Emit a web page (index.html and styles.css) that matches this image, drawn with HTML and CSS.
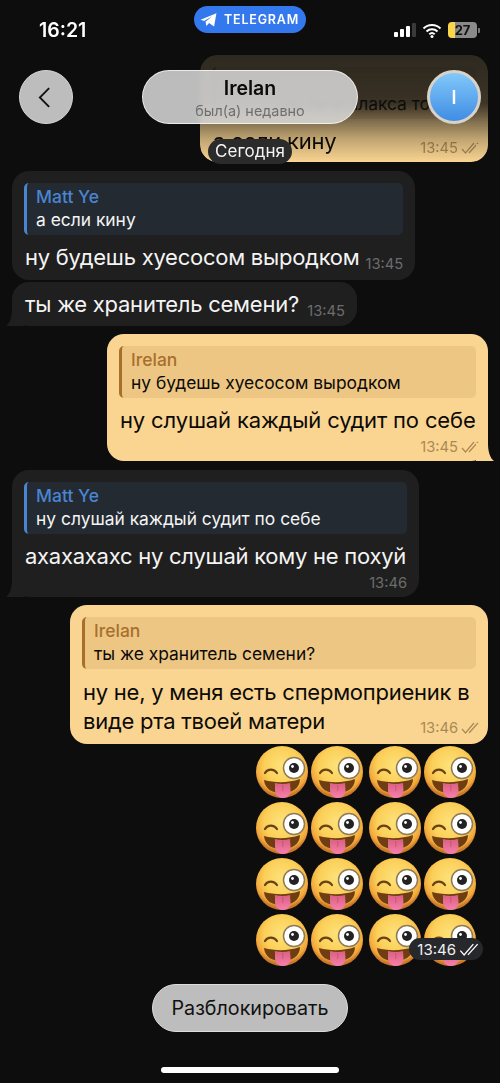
FILE: index.html
```html
<!DOCTYPE html>
<html lang="ru">
<head>
<meta charset="utf-8">
<title>Irelan</title>
<link rel="stylesheet" href="styles.css">
</head>
<body>
<svg class="defs" width="0" height="0" aria-hidden="true">
  <defs>
    <radialGradient id="skin" cx="50%" cy="38%" r="58%">
      <stop offset="0" stop-color="#fde27a"/>
      <stop offset=".6" stop-color="#fbcf58"/>
      <stop offset=".88" stop-color="#f2a83a"/>
      <stop offset="1" stop-color="#c9782a"/>
    </radialGradient>
    <linearGradient id="tongue" x1="0" y1="0" x2="0" y2="1">
      <stop offset="0" stop-color="#d9607e"/>
      <stop offset="1" stop-color="#f77fae"/>
    </linearGradient>
    <symbol id="face" viewBox="0 0 52 52">
      <circle cx="26" cy="26" r="26" fill="url(#skin)"/>
      <path d="M9 27c2.500-4.500 9-4.500 12 0" fill="none" stroke="#6b4214" stroke-width="2.200" stroke-linecap="round"/>
      <circle cx="38" cy="22" r="10.500" fill="#fff" stroke="#8f7a58" stroke-width="1.500"/>
      <circle cx="38" cy="22" r="5" fill="#222"/>
      <circle cx="36.500" cy="20.500" r="1.400" fill="#fff"/>
      <path d="M8 34c11 3 25 3 36-1 0 9-8 14-18 14S9 43 8 34z" fill="#6e3d12"/>
      <path d="M19 37c5 1.300 10 1.300 15 0l.5 7c.3 5-3.300 8-7.500 8s-8-3-8-8z" fill="url(#tongue)"/>
      <path d="M26.800 39v6" stroke="#c9507a" stroke-width="1" fill="none"/>
    </symbol>
    <symbol id="checks" viewBox="0 0 18 12">
      <path d="M1 7l3.500 4L13 1M8 11L17 1" fill="none" stroke="currentColor" stroke-width="1.200"/>
    </symbol>
  </defs>
</svg>

<main class="chat">
  <article class="bubble out tail faded">
    <div class="reply">
      <div class="reply-name">Irelan</div>
      <div class="reply-text shifted">ну ты и плакса то</div>
    </div>
    <div class="line">
      <span class="text">а если кину</span>
      <span class="time">13:45<svg class="check"><use href="#checks"/></svg></span>
    </div>
  </article>

  <article class="bubble in first-in w403">
    <div class="reply">
      <div class="reply-name">Matt Ye</div>
      <div class="reply-text">а если кину</div>
    </div>
    <div class="line">
      <span class="text">ну будешь хуесосом выродком</span>
      <span class="time">13:45</span>
    </div>
  </article>

  <article class="bubble in tail joined w345">
    <div class="line solo">
      <span class="text">ты же хранитель семени?</span>
      <span class="time">13:45</span>
    </div>
  </article>

  <article class="bubble out tail gap-8 w381">
    <div class="reply">
      <div class="reply-name">Irelan</div>
      <div class="reply-text">ну будешь хуесосом выродком</div>
    </div>
    <div class="text block loose">ну слушай каждый судит по себе</div>
    <div class="time right">13:45<svg class="check"><use href="#checks"/></svg></div>
  </article>

  <article class="bubble in tail gap-9 w407">
    <div class="reply">
      <div class="reply-name">Matt Ye</div>
      <div class="reply-text">ну слушай каждый судит по себе</div>
    </div>
    <div class="text block">ахахахахс ну слушай кому не похуй</div>
    <div class="time right">13:46</div>
  </article>

  <article class="bubble out gap-8 wide">
    <div class="reply">
      <div class="reply-name">Irelan</div>
      <div class="reply-text">ты же хранитель семени?</div>
    </div>
    <div class="text block">ну не, у меня есть спермоприеник в</div>
    <div class="line last">
      <span class="text">виде рта твоей матери</span>
      <span class="time">13:46<svg class="check"><use href="#checks"/></svg></span>
    </div>
  </article>

  <section class="stickers">
    <svg class="emoji"><use href="#face"/></svg><svg class="emoji"><use href="#face"/></svg><svg class="emoji"><use href="#face"/></svg><svg class="emoji"><use href="#face"/></svg>
    <svg class="emoji"><use href="#face"/></svg><svg class="emoji"><use href="#face"/></svg><svg class="emoji"><use href="#face"/></svg><svg class="emoji"><use href="#face"/></svg>
    <svg class="emoji"><use href="#face"/></svg><svg class="emoji"><use href="#face"/></svg><svg class="emoji"><use href="#face"/></svg><svg class="emoji"><use href="#face"/></svg>
    <svg class="emoji"><use href="#face"/></svg><svg class="emoji"><use href="#face"/></svg><svg class="emoji"><use href="#face"/></svg><svg class="emoji"><use href="#face"/></svg>
    <div class="sticker-time">13:46<svg class="check big"><use href="#checks"/></svg></div>
  </section>

  <button class="unblock" type="button">Разблокировать</button>
  <div class="home-bar"></div>
</main>

<header class="status">
  <span class="clock">16:21</span>
  <div class="tg-pill">
    <svg class="plane" viewBox="0 0 18 15"><path d="M0.500 7.200 17.500 0.300 15 14.500 9.600 10.600 6.800 14 5.800 9.300 13 3.500 4.300 8.700z" fill="#fff"/></svg>
    <span>TELEGRAM</span>
  </div>
  <div class="indicators">
    <div class="signal"><i class="b1"></i><i class="b2"></i><i class="b3"></i><i class="b4"></i></div>
    <svg class="wifi" viewBox="0 0 20 15"><path d="M1.500 5.500a12 12 0 0 1 17 0M4.500 8.500a8 8 0 0 1 11 0M7.300 11.300a4 4 0 0 1 5.400 0" fill="none" stroke="#fff" stroke-width="2"/><circle cx="10" cy="13.500" r="1.500" fill="#fff"/></svg>
    <div class="battery"><span class="battery-level">27</span></div>
    <span class="battery-nub"></span>
  </div>
</header>

<nav class="topbar">
  <button class="round back" type="button" aria-label="Назад">
    <svg viewBox="0 0 14 24" class="chev"><path d="M12 2 2 12l10 10" fill="none" stroke="#111" stroke-width="2"/></svg>
  </button>
  <div class="title-pill">
    <div class="title">Irelan</div>
    <div class="subtitle">был(а) недавно</div>
  </div>
  <div class="avatar">I</div>
</nav>

<div class="day">Сегодня</div>
</body>
</html>
```
FILE: styles.css
```css
* { box-sizing: border-box; }
html, body { margin: 0; height: 1083px; overflow: hidden; }
body {
  position: relative;
  background: #0d0d0d;
  font-family: Inter, "Noto Sans", sans-serif;
  color: #fff;
}
.defs { position: absolute; }

/* Chat column */
.chat {
  display: flex;
  flex-direction: column;
  padding: 55px 12px 0;
}
.bubble {
  position: relative;
  width: fit-content;
  border-radius: 17px;
  padding: 12px 12px 0;
}
.in { background: #1f1f1f; color: #f4f4f4; align-self: flex-start; }
.out { background: #fad592; color: #0c0a06; align-self: flex-end; }
.first-in { margin-top: 9px; padding-bottom: 8px; }
.joined { margin-top: 2px; padding: 8px 12px 7px; }
.gap-8 { margin-top: 8px; }
.gap-9 { margin-top: 9px; }
.w345 { width: 345px; }
.w381 { width: 381px; }
.w403 { width: 403px; }
.w407 { width: 407px; }
.wide { width: 418px; }

.tail::after {
  content: "";
  position: absolute;
  bottom: 0;
  width: 18px;
  height: 18px;
  background: inherit;
}
.in.tail::after {
  left: -6px;
  clip-path: path("M6 0C6 9 4 15 0 18L18 18L18 0Z");
}
.out.tail::after {
  right: -6px;
  clip-path: path("M12 0C12 9 14 15 18 18L0 18L0 0Z");
}
.faded {
  width: 288px;
  padding-bottom: 6px;
  -webkit-mask-image: linear-gradient(to bottom, rgba(0,0,0,.14) 0, rgba(0,0,0,.2) 45%, rgba(0,0,0,.75) 78%, #000 100%);
  mask-image: linear-gradient(to bottom, rgba(0,0,0,.14) 0, rgba(0,0,0,.2) 45%, rgba(0,0,0,.75) 78%, #000 100%);
}

/* Reply quote */
.reply {
  height: 52px;
  border-radius: 5px;
  border-left: 3px solid;
  padding: 2px 8px 0 9px;
  overflow: hidden;
}
.in .reply { background: #232a32; border-color: #4a85d1; }
.out .reply { background: #edc684; border-color: #a86f2c; }
.reply-name { font-size: 17.500px; font-weight: 500; line-height: 23px; }
.in .reply-name { color: #4a85d1; }
.out .reply-name { color: #a8702e; }
.reply-text { font-size: 17.400px; line-height: 23px; white-space: nowrap; }
.shifted { text-align: right; padding-right: 38px; }

/* Message text */
.text {
  font-size: 22px;
  letter-spacing: -.25px;
  line-height: 29px;
  white-space: nowrap;
  margin-left: 1px;
}
.text.loose { letter-spacing: -.15px; }
.block { margin-top: 8px; }
.wide .block { margin-top: 9px; }
.line {
  display: flex;
  justify-content: space-between;
  align-items: flex-end;
  gap: 6px;
  margin-top: 8px;
}
.line.solo { margin-top: 0; }
.line.last { margin-top: 0; padding-bottom: 8px; }
.time {
  display: inline-flex;
  align-items: center;
  gap: 3px;
  font-size: 14.700px;
  line-height: 18px;
  white-space: nowrap;
  position: relative;
  top: 1px;
}
.in .time { color: #6c6c6c; }
.out .time { color: #a98a56; margin-right: -3px; }
.time.right {
  display: flex;
  justify-content: flex-end;
  margin: 2px 0 6px;
}
.out .time.right { margin-right: -3px; }
.check { width: 18px; height: 12px; }
.check.big { width: 20px; height: 13px; color: #fff; }

/* Emoji block */
.stickers {
  position: relative;
  align-self: flex-end;
  margin: 2px 12px 0 0;
  padding-right: 3px;
  display: grid;
  grid-template-columns: repeat(4, 52px);
  column-gap: 3px;
  row-gap: 4px;
}
.emoji { width: 52px; height: 52px; display: block; }
.emoji:nth-child(4n+3), .emoji:nth-child(4n+4) { position: relative; left: 3px; }
.sticker-time {
  position: absolute;
  right: -7px;
  bottom: 6px;
  display: flex;
  align-items: center;
  gap: 3px;
  height: 22px;
  padding: 0 4px 0 8px;
  border-radius: 11px;
  background: #26282b;
  color: #f0f0f0;
  font-size: 15px;
}

/* Unblock + home */
.unblock {
  align-self: center;
  margin-top: 18px;
  width: 196px;
  height: 48px;
  border-radius: 24px;
  border: 1px solid #dcdcdc;
  background: #bdbdbd;
  color: #111;
  font-family: inherit;
  font-size: 19.700px;
}
.home-bar {
  align-self: center;
  margin-top: 35px;
  width: 178px;
  height: 6px;
  border-radius: 3px;
  background: #fff;
}

/* Status bar overlay */
.status {
  position: absolute;
  top: 0;
  left: 0;
  width: 500px;
  height: 60px;
  display: flex;
  align-items: flex-start;
  justify-content: space-between;
  padding: 0 20px 0 39px;
}
.clock { margin-top: 19px; font-size: 19.500px; font-weight: 600; line-height: 22px; }
.tg-pill {
  position: absolute;
  top: 6px;
  left: 194px;
  width: 112px;
  height: 27px;
  border-radius: 14px;
  background: #3478ee;
  display: flex;
  align-items: center;
  gap: 7px;
  padding-left: 6px;
  font-size: 12.500px;
  font-weight: 600;
  letter-spacing: .8px;
}
.plane { width: 17px; height: 14px; flex: none; }
.indicators { display: flex; align-items: center; margin-top: 22px; height: 16px; }
.signal { display: flex; align-items: flex-end; gap: 2px; height: 14px; }
.signal i { display: block; width: 4px; background: #fff; border-radius: 1px; }
.signal .b1 { height: 5px; }
.signal .b2 { height: 8px; }
.signal .b3 { height: 11px; }
.signal .b4 { height: 14px; background: #3a3a3a; }
.wifi { width: 20px; height: 15px; margin-left: 6px; }
.battery {
  margin-left: 6px;
  width: 29px;
  height: 16px;
  border-radius: 4px;
  background: linear-gradient(to right, #fbd649 0, #fbd649 7px, #8a8a8a 7px);
  overflow: hidden;
  text-align: center;
}
.battery-level {
  display: block;
  color: #111;
  font-size: 13px;
  font-weight: 700;
  line-height: 16px;
}
.battery-nub { width: 2px; height: 5px; margin-left: 1px; background: #777; border-radius: 0 1px 1px 0; }

/* Floating top bar overlay */
.topbar {
  position: absolute;
  top: 70px;
  left: 19px;
  width: 462px;
  height: 54px;
  display: flex;
  justify-content: space-between;
  align-items: stretch;
}
.round {
  width: 54px;
  height: 54px;
  padding: 0;
  border-radius: 50%;
  border: 1px solid #d5d5d5;
  background: #bdbdbd;
  display: flex;
  align-items: center;
  justify-content: center;
}
.chev { width: 13px; height: 23px; margin-right: 3px; }
.title-pill {
  width: 216px;
  border-radius: 27px;
  border: 1px solid rgba(255,255,255,.7);
  background: rgba(222,222,222,.84);
  -webkit-backdrop-filter: blur(3px);
  backdrop-filter: blur(3px);
  text-align: center;
  color: #0a0a0a;
}
.title { margin-top: 6px; font-size: 19.500px; font-weight: 600; line-height: 23px; }
.subtitle { margin-top: 2px; font-size: 14.400px; line-height: 17px; color: #6f6f6f; }
.avatar {
  width: 54px;
  height: 54px;
  border-radius: 50%;
  border: 3px solid #d8d3c8;
  background: linear-gradient(to bottom, #82c8fa, #3f8de4);
  color: #fff;
  font-size: 18px;
  font-weight: 600;
  display: flex;
  align-items: center;
  justify-content: center;
}

.day {
  position: absolute;
  top: 139px;
  left: 208px;
  width: 84px;
  height: 25px;
  border-radius: 13px;
  background: #2b2b2b;
  color: #f5f5f5;
  font-size: 17px;
  line-height: 25px;
  text-align: center;
}
```
